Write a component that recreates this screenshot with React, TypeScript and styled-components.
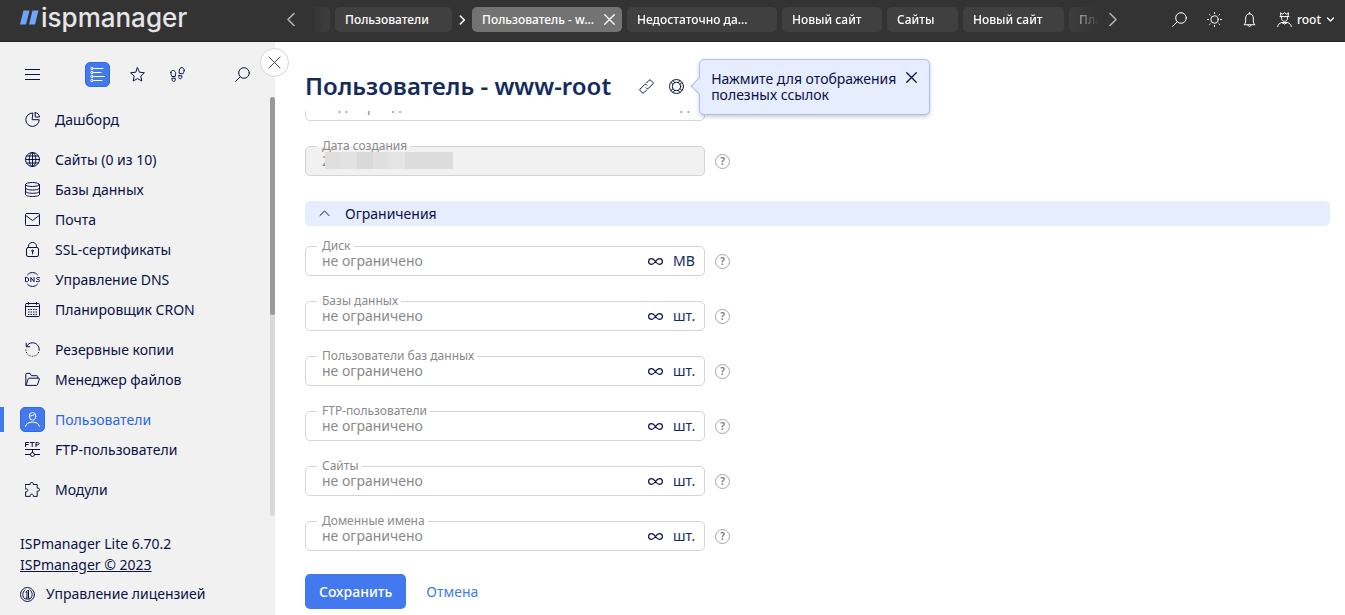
import React from "react";
import styled, { createGlobalStyle, css } from "styled-components";

const colors = {
  bar: "#333333",
  tab: "#404040",
  tabActive: "#737373",
  side: "#f1f1f1",
  ink: "#0b1147",
  title: "#152b5c",
  accent: "#4379ee",
  pale: "#e5edff",
  paleLine: "#a3c0fb",
  line: "#d4d4d4",
  muted: "#8a8a8a",
};

const GlobalStyle = createGlobalStyle`
  *, *::before, *::after { box-sizing: border-box; }
  body {
    margin: 0;
    background: #fff;
    color: ${colors.ink};
    font: 14px/20px "Noto Sans", "Open Sans", sans-serif;
  }
  button, input { font: inherit; color: inherit; }
  button { padding: 0; border: 0; background: none; cursor: pointer; }
  a { color: inherit; text-decoration: none; }
`;

/* ---------- icons, drawn on a 15 unit grid ---------- */

const icons = {
  menu: <path d="M0 2.5h15M0 7.5h15M0 12.5h15" />,
  list: (
    <>
      <circle cx="2" cy="1.5" r="1.2" />
      <circle cx="2" cy="5.5" r="1.2" />
      <circle cx="2" cy="9.5" r="1.2" />
      <circle cx="2" cy="13.5" r="1.2" />
      <path d="M4.5 1.5H13M4.5 5.5H11M4.5 9.5H15M4.5 13.5H12" />
    </>
  ),
  star: (
    <path d="M7.5.8l2 4.4 4.900.6-3.600 3.300 1 4.900-4.300-2.400L3.200 14l1-4.900L.6 5.800l4.900-.6z" />
  ),
  steps: (
    <>
      <path d="M.8 5.500C.8 4 2 3.400 3.200 3.500c1.400.1 2.500 1.500 2.500 3L5.200 9.500H2C1.500 8.500.8 7 .8 5.500z" />
      <path d="M2.200 11.200h3v1.800c0 1-.7 1.500-1.500 1.500s-1.500-.6-1.500-1.500z" />
      <path d="M14.200 3.500C14.400 2 13.400.6 12 .6 10.500.500 9.500 1.600 9.300 3L9.100 6.200l3.700.7c.6-1 1.200-2 1.400-3.400z" />
      <path d="M9 8.400l3 .5-.3 1.700c-.2.900-.9 1.300-1.700 1.100-.8-.1-1.300-.8-1.200-1.600z" />
    </>
  ),
  search: (
    <>
      <circle cx="9" cy="6" r="5.300" />
      <path d="M5.200 9.800L.5 14.500" />
    </>
  ),
  close: <path d="M2 2l11 11M13 2L2 13" />,
  chart: (
    <>
      <path d="M7.500 1A6.700 6.700 0 1 0 14.200 7.700H7.500z" />
      <path d="M10.200.6v4.400h4.300C14.200 2.500 12.700 1 10.200.6z" />
    </>
  ),
  globe: (
    <>
      <circle cx="7.500" cy="7.500" r="7" />
      <ellipse cx="7.500" cy="7.500" rx="3.300" ry="7" />
      <path d="M7.500.5v14M.5 7.500h14M1.500 4h12M1.500 11h12" />
    </>
  ),
  database: (
    <>
      <ellipse cx="7.500" cy="2.500" rx="7" ry="2" />
      <path d="M.5 2.500v10c0 1.200 3 2 7 2s7-.8 7-2v-10M.5 6c0 1.200 3 2 7 2s7-.8 7-2M.5 9.300c0 1.200 3 2 7 2s7-.8 7-2" />
    </>
  ),
  mail: (
    <>
      <rect x=".5" y="1.500" width="14" height="12" rx="1" />
      <path d="M1.200 3.800l6.300 4.700 6.300-4.700" />
    </>
  ),
  lock: (
    <>
      <rect x="1.500" y="5.500" width="12" height="9" rx="1.500" />
      <path d="M3.500 5.500V4.200C3.500 2 5.200.5 7.500.5s4 1.500 4 3.700v1.300M7.500 9.500v2.500" />
      <circle cx="7.500" cy="8.800" r=".8" />
    </>
  ),
  dns: (
    <>
      <path d="M2.500 2.800C5 -.3 10 -.3 12.500 2.800M2.500 12.200C5 15.300 10 15.300 12.500 12.200" />
      <path d="M.5 5.500v4.200h1.300c2.500 0 2.500-4.200 0-4.200zM5.800 9.700V5.500l3.200 4.200V5.500M14.600 5.700c-1-.4-3-.5-3 .7 0 1.500 3.100.7 3.100 2.200 0 1.300-2.200 1.300-3.300.8" />
    </>
  ),
  calendar: (
    <>
      <rect x=".5" y="1.500" width="14" height="13" rx="1" />
      <path d="M.5 4.500h14M3.500 0v2.500M11.500 0v2.500" />
      <path d="M3 7.500h10M3 10h10M3 12.400h10" strokeLinecap="butt" strokeDasharray="1.500 1" />
    </>
  ),
  restore: (
    <>
      <path d="M1.200 1.200v3.500h3.500M1.500 4.500C2.800 2 5 .8 7.500.8c3.800 0 6.700 2.900 6.700 6.700" />
      <path d="M14.200 7.500c0 4-3 6.800-6.700 6.800S.8 11.500.8 7.500" strokeLinecap="butt" strokeDasharray="1.200 1.300" />
    </>
  ),
  folder: (
    <>
      <path d="M.8 13V2.300c0-.6.300-.9.900-.9H5l1.500 2.300h5.300c.6 0 .9.300.9.900v1.600" />
      <path d="M1 13.300l2.200-6.400c.2-.5.500-.7 1-.7h9.400c.7 0 1 .4.8 1l-1.900 5.500c-.2.500-.5.700-1 .7H1.500" />
    </>
  ),
  person: (
    <>
      <ellipse cx="7.500" cy="4.300" rx="3.200" ry="3.800" />
      <path d="M4.500 4c2.500 0 4.500-.7 5.300-2.300M.5 14.500c.6-3 3.500-4.400 7-4.400s6.400 1.400 7 4.400" />
    </>
  ),
  ftp: (
    <>
      <path d="M.5 4.500V.5h3.200M.5 2.500h2.700M5.200.5h4M7.200.5v4M11 4.500V.5h1.700c2 0 2 2.300 0 2.300H11M0 7.500h15M7.500 7.500v3M0 12.500h5.500M9.500 12.500H15" />
      <circle cx="7.500" cy="12.500" r="2" />
    </>
  ),
  puzzle: (
    <path d="M.6 2.500h4.600C4.900.6 5.800.5 6.700.5s1.800.1 1.500 2h4v3.700c1.400-.3 2.300.3 2.300 1.500s-.9 1.800-2.300 1.500v5.200H8.300c.3-1.500-.5-2.200-1.600-2.200s-1.800.7-1.500 2.200H.6V9.800c1.400.3 2.200-.5 2.200-1.500S2 6.600.6 6.900z" />
  ),
  license: (
    <>
      <circle cx="7.500" cy="7.500" r="7" />
      <path d="M5 3C2 5 2 10 5 12M10 3c3 2 3 7 0 9" />
      <path d="M6 5l1.500-1.500h1V11h1v1H6v-1h1V5z" />
    </>
  ),
  sun: (
    <>
      <circle cx="7.500" cy="7.500" r="3.700" />
      <path
        d="M7.500.5v1M7.500 13.500v1M.5 7.500h1M13.500 7.500h1M2.500 2.500l.6.6M11.900 11.900l.6.6M2.500 12.500l.6-.6M11.900 3.100l.6-.6"
      />
    </>
  ),
  bell: (
    <>
      <path d="M2.300 12.500c1-1 1.400-2 1.400-3.500V6c0-2.500 1.500-4.200 3.800-4.200s3.800 1.700 3.800 4.200v3c0 1.500.4 2.500 1.400 3.500z" />
      <path d="M7.500 0v1.800M5.900 12.800c.2 2.300 3 2.300 3.200 0" />
    </>
  ),
  admin: (
    <>
      <path d="M4 4.500L3.500.8l2.300 1.400L7.500.5l1.700 1.700L11.500.8 11 4.500M3 4.600h9M4.500 4.600v1.700c0 4 6 4 6 0V4.600" />
      <path d="M.6 14.800c.2-2 1.500-3.500 4-4.300h5.800c2.500.8 3.800 2.300 4 4.300M4.500 10.500l3 1.500 3-1.500" />
    </>
  ),
  link: (
    <>
      <path d="M7.500 4L10 1.300Q10.900.4 11.800 1.300L13.800 3.300Q14.600 4.200 13.800 5L9.500 9.300Q8.500 10 7.500 9.300L7 8.800" />
      <path d="M7.500 11L5 13.700Q4.100 14.600 3.200 13.700L1.200 11.700Q.4 10.800 1.200 10L5.500 5.700Q6.500 5 7.500 5.700L8 6.200" />
    </>
  ),
  buoy: (
    <>
      <circle cx="7.500" cy="7.500" r="7" />
      <circle cx="7.500" cy="7.500" r="4.200" />
      <path d="M4 1.500l1.800 2.300M2 3.500l2 1.700M11 1.500L9.200 3.800M13 3.500l-2 1.700M4 13.500l1.800-2.300M2 11.500l2-1.700M11 13.500l-1.800-2.300M13 11.500l-2-1.700" />
    </>
  ),
  infinity: (
    <path d="M7.500 7.500C6 5.400 5 4.700 3.700 4.700 2 4.700.6 5.900.6 7.500S2 10.300 3.700 10.300c1.300 0 2.300-.7 3.800-2.800s2.500-2.800 3.800-2.800c1.700 0 3.100 1.200 3.100 2.800s-1.400 2.800-3.100 2.800c-1.300 0-2.300-.7-3.800-2.800z" />
  ),
  left: <path d="M10 1.500l-6 6 6 6" />,
  right: <path d="M5 1.500l6 6-6 6" />,
  up: <path d="M3 9.500L7.500 5l4.500 4.500" />,
  down: <path d="M2.500 5l5 5 5-5" />,
};

type IconName = keyof typeof icons;

const Svg = styled.svg`
  display: block;
  flex: none;
  fill: none;
  stroke: currentColor;
  stroke-linecap: round;
  stroke-linejoin: round;
`;

const Icon = ({ name, size = 15, weight = 1 }: { name: IconName; size?: number; weight?: number }) => (
  <Svg width={size} height={size} viewBox="0 0 15 15" strokeWidth={(weight * 15) / size} aria-hidden="true">
    {icons[name]}
  </Svg>
);

/* ---------- top bar ---------- */

const Shell = styled.div`
  display: flex;
  flex-direction: column;
  height: 100vh;
`;

const TopBar = styled.header`
  display: flex;
  align-items: center;
  flex: none;
  height: 42px;
  padding: 0 10px 2px 0;
  background: ${colors.bar};
  color: #fff;
  border-bottom: 1px solid #222;
`;

const Logo = styled.a`
  display: flex;
  align-items: center;
  gap: 2px;
  flex: none;
  width: 275px;
  padding: 0 0 4px 20px;
  color: #e6e6e6;
  font: 500 26px/32px Inter, sans-serif;
`;

const ArrowButton = styled.button`
  display: grid;
  place-items: center;
  flex: none;
  width: 32px;
  height: 32px;
  color: #b5b5b5;
`;

const TabStrip = styled.nav`
  display: flex;
  align-items: center;
  gap: 5px;
  flex: 1;
  min-width: 0;
  overflow: hidden;
  margin: 0 -2px 0 2px;
  mask-image: linear-gradient(90deg, transparent, #000 24px, #000 calc(100% - 36px), transparent);
`;

const Tab = styled.div<{ $width: number; $active?: boolean }>`
  display: flex;
  align-items: center;
  flex: none;
  width: ${(p) => p.$width}px;
  height: 25px;
  padding: 0 5px 0 10px;
  border-radius: 5px;
  background: ${(p) => (p.$active ? colors.tabActive : colors.tab)};
  font-size: 12px;
  font-weight: 500;
  a {
    flex: 1;
    white-space: nowrap;
  }
`;

const TabClose = styled.button`
  display: grid;
  place-items: center;
  width: 15px;
  height: 15px;
`;

const Tools = styled.div`
  display: flex;
  align-items: center;
  flex: none;
  gap: 20px;
  margin-left: 43px;
  font-size: 12px;
  font-weight: 500;
`;

const ToolButton = styled.button`
  display: flex;
  align-items: center;
  gap: 5px;
`;

/* ---------- sidebar ---------- */

const Body = styled.div`
  display: flex;
  flex: 1;
  min-height: 0;
`;

const Sidebar = styled.aside`
  position: relative;
  display: flex;
  flex-direction: column;
  flex: none;
  width: 275px;
  background: ${colors.side};
`;

const Modes = styled.div`
  display: flex;
  gap: 15px;
  padding: 20px 20px 10px;
`;

const ModeButton = styled.button<{ $active?: boolean; $lead?: boolean; $trail?: boolean }>`
  display: grid;
  place-items: center;
  width: 25px;
  height: 25px;
  border-radius: 5px;
  ${(p) => p.$lead && css`margin-right: 25px;`}
  ${(p) => p.$trail && css`margin-left: auto;`}
  ${(p) =>
    p.$active &&
    css`
      background: ${colors.accent};
      border: 1px solid #2f68e8;
      color: #fff;
    `}
`;

const Collapse = styled.button`
  position: absolute;
  top: 6px;
  right: -14px;
  z-index: 2;
  display: grid;
  place-items: center;
  width: 29px;
  height: 29px;
  border: 1px solid #d5d5d5;
  border-radius: 50%;
  background: #fff;
  color: #444;
`;

const NavScroll = styled.div`
  display: flex;
  flex: 1;
  min-height: 0;
  overflow: hidden;
`;

const Nav = styled.nav`
  flex: 1;
  padding-top: 8px;
`;

const NavGroup = styled.ul`
  list-style: none;
  margin: 0 0 10px;
  padding: 0;
`;

const NavLink = styled.a<{ $active?: boolean }>`
  position: relative;
  display: flex;
  align-items: center;
  gap: 10px;
  height: 30px;
  padding-left: 20px;
  ${(p) =>
    p.$active &&
    css`
      color: #2a66ea;
      &::before {
        content: "";
        position: absolute;
        left: 0;
        top: 2px;
        width: 4px;
        height: 25px;
        background: ${colors.accent};
      }
    `}
`;

const NavIcon = styled.span<{ $active?: boolean }>`
  display: grid;
  place-items: center;
  width: 25px;
  height: 25px;
  margin-bottom: 1px;
  border-radius: 5px;
  ${(p) =>
    p.$active &&
    css`
      background: ${colors.accent};
      border: 1px solid #2f68e8;
      color: #fff;
    `}
`;

const ScrollTrack = styled.div`
  width: 5px;
  background: #d9d9d9;
  border-radius: 3px;
`;

const ScrollThumb = styled.div`
  height: 52%;
  background: #999;
  border-radius: 3px;
`;

const SideFooter = styled.footer`
  flex: none;
  height: 99px;
  padding: 17px 20px 0;
`;

const FooterLine = styled.div`
  line-height: 21px;
  a { text-decoration: underline; }
`;

const License = styled.a`
  display: flex;
  align-items: center;
  gap: 11px;
  margin-top: 9px;
`;

/* ---------- content ---------- */

const Main = styled.main`
  display: flex;
  flex-direction: column;
  flex: 1;
  min-width: 0;
  padding: 0 15px 0 30px;
`;

const TitleRow = styled.div`
  display: flex;
  align-items: center;
  flex: none;
  gap: 15px;
  padding: 29px 0 10px;
`;

const Title = styled.h1`
  margin: 0 13px 0 0;
  color: ${colors.title};
  font-size: 24px;
  line-height: 30px;
  font-weight: 600;
`;

const HintAnchor = styled.div`
  position: relative;
`;

const Hint = styled.div`
  position: absolute;
  left: 30px;
  top: -20px;
  z-index: 3;
  display: flex;
  align-items: flex-start;
  justify-content: space-between;
  width: 231px;
  padding: 11px;
  border: 1px solid ${colors.paleLine};
  border-radius: 5px;
  background: ${colors.pale};
  box-shadow: 0 2px 4px rgba(0, 0, 0, 0.2);
  line-height: 16px;
  white-space: nowrap;
  &::before {
    content: "";
    position: absolute;
    left: -7px;
    top: 20px;
    width: 12px;
    height: 12px;
    border: 1px solid ${colors.paleLine};
    border-width: 0 0 1px 1px;
    background: ${colors.pale};
    transform: rotate(45deg);
  }
`;

const FormScroll = styled.form`
  display: flex;
  flex-direction: column;
  flex: 1;
  min-height: 0;
`;

const FormView = styled.div`
  flex: 1;
  min-height: 0;
  overflow: hidden;
`;

const Scrolled = styled.div`
  margin-top: -20px;
`;

const Fields = styled.div`
  display: flex;
  flex-direction: column;
  gap: 25px;
`;

const FieldRow = styled.div`
  display: flex;
  align-items: center;
  gap: 10px;
`;

const Box = styled.div<{ $disabled?: boolean }>`
  position: relative;
  display: flex;
  align-items: center;
  gap: 10px;
  width: 400px;
  height: 30px;
  padding: 0 10px 0 16px;
  border: 1px solid ${colors.line};
  border-radius: 5px;
  background: ${(p) => (p.$disabled ? "#f1f1f1" : "#fff")};
`;

const Label = styled.label`
  position: absolute;
  left: 11px;
  top: -9px;
  padding: 0 3px 0 5px;
  background: linear-gradient(#fff, #fff) no-repeat 0 0 / 100% 9px;
  color: ${colors.muted};
  font-size: 12px;
  line-height: 15px;
`;

const Input = styled.input`
  flex: 1;
  min-width: 0;
  height: 20px;
  padding: 0;
  border: 0;
  outline: 0;
  background: none;
  color: ${colors.muted};
  &::placeholder {
    color: ${colors.muted};
    opacity: 1;
  }
`;

const Unit = styled.span<{ $muted?: boolean }>`
  width: 21px;
  color: ${(p) => (p.$muted ? colors.muted : colors.title)};
  white-space: nowrap;
`;

const Help = styled.button`
  width: 15px;
  height: 15px;
  border: 1px solid #a6a6a6;
  border-radius: 50%;
  color: #777;
  font-size: 10px;
  line-height: 13px;
  font-weight: 600;
  text-align: center;
`;

const Mosaic = styled.div`
  position: absolute;
  left: 19px;
  top: 5px;
  width: 128px;
  height: 17px;
  background: linear-gradient(
    90deg,
    #dedede 16px, #e2e2e2 16px 32px, #d9d9d9 32px 48px, #dfdfdf 48px 64px,
    #e4e4e4 64px 80px, #dcdcdc 80px
  );
`;

const SectionHead = styled.button`
  display: flex;
  align-items: center;
  gap: 13px;
  width: 100%;
  height: 25px;
  margin: 25px 0 20px;
  padding: 0 12px;
  border-radius: 5px;
  background: ${colors.pale};
`;

const Actions = styled.div`
  display: flex;
  align-items: center;
  flex: none;
  gap: 20px;
  padding-bottom: 6px;
`;

const Submit = styled.button`
  height: 35px;
  padding: 0 14px;
  border-radius: 5px;
  background: ${colors.accent};
  color: #fff;
  font-weight: 500;
`;

const Cancel = styled.button`
  color: ${colors.accent};
`;

/* ---------- data ---------- */

const tabs: { text: string; width: number }[] = [
  { text: "Недостаточно да...", width: 150 },
  { text: "Новый сайт", width: 100 },
  { text: "Сайты", width: 71 },
  { text: "Новый сайт", width: 101 },
  { text: "Планировщик", width: 110 },
];

const groups: { icon: IconName; text: string; active?: boolean }[][] = [
  [{ icon: "chart", text: "Дашборд" }],
  [
    { icon: "globe", text: "Сайты (0 из 10)" },
    { icon: "database", text: "Базы данных" },
    { icon: "mail", text: "Почта" },
    { icon: "lock", text: "SSL-сертификаты" },
    { icon: "dns", text: "Управление DNS" },
    { icon: "calendar", text: "Планировщик CRON" },
  ],
  [
    { icon: "restore", text: "Резервные копии" },
    { icon: "folder", text: "Менеджер файлов" },
  ],
  [
    { icon: "person", text: "Пользователи", active: true },
    { icon: "ftp", text: "FTP-пользователи" },
  ],
  [{ icon: "puzzle", text: "Модули" }],
];

const limits = [
  { id: "disk", label: "Диск", unit: "MB" },
  { id: "db", label: "Базы данных", unit: "шт." },
  { id: "dbusers", label: "Пользователи баз данных", unit: "шт." },
  { id: "ftp", label: "FTP-пользователи", unit: "шт." },
  { id: "sites", label: "Сайты", unit: "шт." },
  { id: "domains", label: "Доменные имена", unit: "шт." },
];

const LogoMark = () => (
  <svg width="19" height="15" viewBox="0 0 19 15" aria-hidden="true">
    <path d="M3.500 0.500h6L6 14.500H0z" fill="#6fa6fb" />
    <path d="M12.500 0.500h6L15 14.500H9z" fill="#6fa6fb" />
  </svg>
);

export default function App() {
  return (
    <Shell>
      <GlobalStyle />
      <TopBar>
        <Logo href="#">
          <LogoMark />
          ispmanager
        </Logo>
        <ArrowButton aria-label="Назад">
          <Icon name="left" weight={1.6} />
        </ArrowButton>
        <TabStrip>
          <Tab $width={21} />
          <Tab $width={117}>
            <a href="#">Пользователи</a>
          </Tab>
          <Icon name="right" size={10} weight={1.6} />
          <Tab $width={150} $active>
            <a href="#">Пользователь - w...</a>
            <TabClose aria-label="Закрыть">
              <Icon name="close" size={13} weight={1.3} />
            </TabClose>
          </Tab>
          {tabs.map((t, i) => (
            <Tab key={i} $width={t.width}>
              <a href="#">{t.text}</a>
            </Tab>
          ))}
        </TabStrip>
        <ArrowButton aria-label="Вперёд">
          <Icon name="right" weight={1.6} />
        </ArrowButton>
        <Tools>
          <ToolButton aria-label="Поиск">
            <Icon name="search" />
          </ToolButton>
          <ToolButton aria-label="Тема">
            <Icon name="sun" />
          </ToolButton>
          <ToolButton aria-label="Уведомления">
            <Icon name="bell" />
          </ToolButton>
          <ToolButton>
            <Icon name="admin" />
            root
            <Icon name="down" size={9} weight={1.3} />
          </ToolButton>
        </Tools>
      </TopBar>

      <Body>
        <Sidebar>
          <Modes>
            <ModeButton $lead aria-label="Меню">
              <Icon name="menu" />
            </ModeButton>
            <ModeButton $active aria-label="Разделы">
              <Icon name="list" />
            </ModeButton>
            <ModeButton aria-label="Избранное">
              <Icon name="star" />
            </ModeButton>
            <ModeButton aria-label="История">
              <Icon name="steps" />
            </ModeButton>
            <ModeButton $trail aria-label="Поиск по меню">
              <Icon name="search" />
            </ModeButton>
          </Modes>
          <Collapse aria-label="Свернуть">
            <Icon name="close" />
          </Collapse>
          <NavScroll>
            <Nav>
              {groups.map((group, i) => (
                <NavGroup key={i}>
                  {group.map((item) => (
                    <li key={item.text}>
                      <NavLink href="#" $active={item.active}>
                        <NavIcon $active={item.active}>
                          <Icon name={item.icon} />
                        </NavIcon>
                        {item.text}
                      </NavLink>
                    </li>
                  ))}
                </NavGroup>
              ))}
            </Nav>
            <ScrollTrack>
              <ScrollThumb />
            </ScrollTrack>
          </NavScroll>
          <SideFooter>
            <FooterLine>ISPmanager Lite 6.70.2</FooterLine>
            <FooterLine>
              <a href="#">ISPmanager © 2023</a>
            </FooterLine>
            <License href="#">
              <Icon name="license" />
              Управление лицензией
            </License>
          </SideFooter>
        </Sidebar>

        <Main>
          <TitleRow>
            <Title>Пользователь - www-root</Title>
            <ToolButton aria-label="Ссылка">
              <Icon name="link" />
            </ToolButton>
            <HintAnchor>
              <ToolButton aria-label="Полезные ссылки">
                <Icon name="buoy" />
              </ToolButton>
              <Hint>
                <span>
                  Нажмите для отображения
                  <br />
                  полезных ссылок
                </span>
                <ToolButton aria-label="Закрыть подсказку">
                  <Icon name="close" size={13} weight={1.3} />
                </ToolButton>
              </Hint>
            </HintAnchor>
          </TitleRow>

          <FormScroll>
            <FormView>
              <Scrolled>
                <Fields>
                  <FieldRow>
                    <Box>
                      <Input aria-label="Код периода" placeholder="Код периода" />
                      <Unit $muted>ед.</Unit>
                    </Box>
                  </FieldRow>
                  <FieldRow>
                    <Box $disabled>
                      <Label htmlFor="created">Дата создания</Label>
                      <Input id="created" defaultValue="2" disabled />
                      <Mosaic />
                    </Box>
                    <Help type="button" aria-label="Справка">?</Help>
                  </FieldRow>
                </Fields>
                <SectionHead type="button">
                  <Icon name="up" />
                  Ограничения
                </SectionHead>
                <Fields>
                  {limits.map((f) => (
                    <FieldRow key={f.id}>
                      <Box>
                        <Label htmlFor={f.id}>{f.label}</Label>
                        <Input id={f.id} placeholder="не ограничено" />
                        <ToolButton type="button" aria-label="Без ограничений">
                          <Icon name="infinity" weight={1.2} />
                        </ToolButton>
                        <Unit>{f.unit}</Unit>
                      </Box>
                      <Help type="button" aria-label="Справка">?</Help>
                    </FieldRow>
                  ))}
                </Fields>
              </Scrolled>
            </FormView>
            <Actions>
              <Submit type="submit">Сохранить</Submit>
              <Cancel type="button">Отмена</Cancel>
            </Actions>
          </FormScroll>
        </Main>
      </Body>
    </Shell>
  );
}
